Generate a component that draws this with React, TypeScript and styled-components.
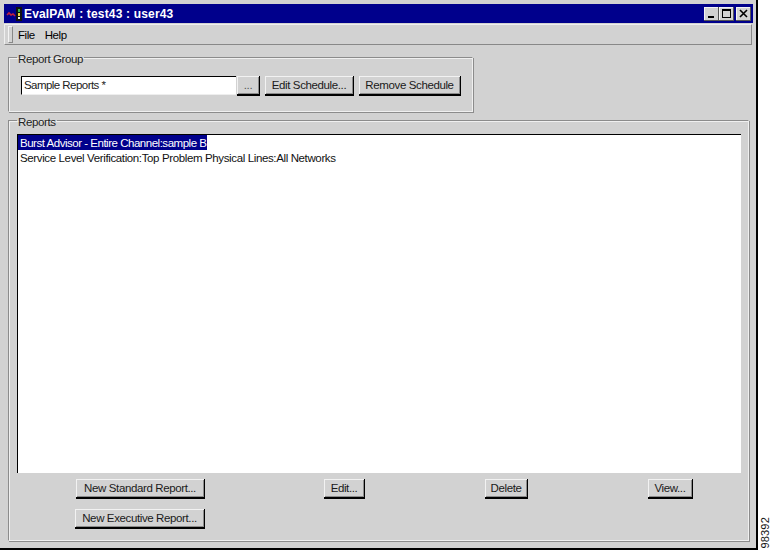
import React from "react";
import styled, { createGlobalStyle } from "styled-components";

const Global = createGlobalStyle`
  html, body { margin: 0; padding: 0; background: #fff; }
  body { font-family: "Liberation Sans", Arial, sans-serif; font-size: 12px; color: #000; }
`;

const Page = styled.div`
  display: flex;
  width: 771px;
  height: 550px;
  overflow: hidden;
`;

const Window = styled.div`
  width: 758px;
  height: 550px;
  box-sizing: border-box;
  background: #d2d2d2;
  border-right: 2px solid #000;
  border-bottom: 2px solid #000;
  padding: 4px 3px 0 4px;
  display: flex;
  flex-direction: column;
  flex: none;
`;

const TitleBar = styled.div`
  height: 19px;
  background: #00008c;
  display: flex;
  align-items: center;
  padding: 0 2px;
  flex: none;
`;

const TitleText = styled.span`
  color: #fff;
  font-weight: 700;
  font-size: 12px;
  letter-spacing: 0.17px;
  margin-left: 2px;
  flex: 1;
`;

const Controls = styled.div`
  display: flex;
  align-items: center;
`;

const ControlButton = styled.div<{ $gap?: boolean }>`
  width: 15px;
  height: 14px;
  background: #d2d2d2;
  margin-left: ${(p) => (p.$gap ? "2px" : "0")};
  box-shadow: inset -1px -1px 0 #555, inset 1px 1px 0 #f4f4f4;
  display: flex;
  align-items: center;
  justify-content: center;
`;

const MenuBar = styled.div`
  height: 21px;
  margin-top: 1px;
  margin-right: 1px;
  box-sizing: border-box;
  border: 1px solid;
  border-color: #efefef #888 #888 #efefef;
  display: flex;
  align-items: center;
  padding-left: 3px;
  flex: none;
`;

const Grip = styled.div`
  width: 3px;
  height: 15px;
  border: 1px solid;
  border-color: #f4f4f4 #888 #888 #f4f4f4;
  margin-right: 5px;
`;

const MenuItem = styled.span`
  margin-right: 10px;
  font-size: 11.5px;
  letter-spacing: -0.45px;
`;

const GroupBox = styled.fieldset`
  margin: 0;
  min-width: 0;
  box-sizing: border-box;
  border: 1px solid #8c8c8c;
  border-right-color: #f0f0f0;
  border-bottom-color: #f0f0f0;
  box-shadow: inset 1px 1px 0 #f0f0f0, 1px 1px 0 #8c8c8c;
  padding: 0;
`;

const TopGroup = styled(GroupBox)`
  width: 465px;
  height: 64px;
  margin: 3px 0 0 4px;
  flex: none;
`;

const BottomGroup = styled(GroupBox)`
  width: 741px;
  height: 430px;
  margin: -1px 0 0 4px;
  flex: none;
  display: flex;
  flex-direction: column;
`;

const Legend = styled.legend`
  margin-left: 8px;
  padding: 4px 1px 0;
  font-size: 11.5px;
  letter-spacing: -0.38px;
  line-height: 14px;
  color: #222;
`;

const GroupRow = styled.div`
  display: flex;
  align-items: flex-start;
  padding: 10px 0 0 12px;
`;

const Input = styled.div`
  width: 215px;
  height: 19px;
  box-sizing: border-box;
  background: #fff;
  border-top: 1px solid #000;
  border-left: 1px solid #000;
  border-bottom: 1px solid #eee;
  padding-left: 2px;
  line-height: 16px;
  font-size: 11.5px;
  letter-spacing: -0.55px;
  color: #222;
`;

const Btn = styled.div<{ $w: number; $ml?: number; $dim?: boolean }>`
  width: ${(p) => p.$w}px;
  height: 20px;
  margin-left: ${(p) => p.$ml ?? 0}px;
  box-sizing: border-box;
  background: #d2d2d2;
  border-right: 1px solid #000;
  border-bottom: 2px solid #000;
  box-shadow: inset 1px 1px 0 #f2f2f2, inset -1px -1px 0 #8c8c8c;
  display: flex;
  align-items: center;
  justify-content: center;
  font-size: 11.5px;
  letter-spacing: -0.38px;
  color: ${(p) => (p.$dim ? "#555" : "#1a1a1a")};
  flex: none;
`;

const List = styled.div`
  width: 724px;
  height: 339px;
  margin: 5px 0 0 8px;
  box-sizing: border-box;
  background: #fff;
  border-top: 1px solid #000;
  border-left: 1px solid #000;
  flex: none;
`;

const ListRow = styled.div<{ $selected?: boolean }>`
  display: block;
  width: fit-content;
  height: 15px;
  line-height: 17px;
  padding: 0 1px 0 2px;
  font-size: 11.5px;
  letter-spacing: ${(p) => (p.$selected ? "-0.48px" : "-0.37px")};
  background: ${(p) => (p.$selected ? "#00008c" : "transparent")};
  color: ${(p) => (p.$selected ? "#fff" : "#111")};
`;

const ActionRow = styled.div<{ $top: number; $left: number }>`
  display: flex;
  margin: ${(p) => p.$top}px 0 0 ${(p) => p.$left}px;
  flex: none;
`;

const Stamp = styled.div`
  align-self: flex-end;
  writing-mode: vertical-rl;
  transform: rotate(180deg);
  font-size: 11px;
  line-height: 12px;
  margin: 0 0 1px 1px;
  color: #111;
  letter-spacing: 0.2px;
`;

const AppIcon = () => (
  <svg width="16" height="14" viewBox="0 0 16 14">
    <path d="M1 8l2-2 2 2 2-1 2 2" stroke="#c2203c" strokeWidth="1.6" fill="none" />
    <rect x="10" y="0" width="6" height="14" fill="#111" />
    <rect x="12" y="2" width="2" height="3" fill="#35b04a" />
    <rect x="12" y="6" width="2" height="3" fill="#e6d640" />
    <rect x="12" y="10" width="2" height="2" fill="#eee" />
  </svg>
);

export default function App() {
  return (
    <Page>
      <Global />
      <Window>
        <TitleBar>
          <AppIcon />
          <TitleText>EvalPAM : test43 : user43</TitleText>
          <Controls>
            <ControlButton>
              <svg width="9" height="9" viewBox="0 0 9 9"><rect x="1" y="7" width="6" height="2" fill="#000" /></svg>
            </ControlButton>
            <ControlButton>
              <svg width="9" height="9" viewBox="0 0 9 9"><path d="M0 0h9v9H0zM1 2v6h7V2z" fill="#000" fillRule="evenodd" /></svg>
            </ControlButton>
            <ControlButton $gap>
              <svg width="9" height="9" viewBox="0 0 9 9"><path d="M1 1l7 7M8 1L1 8" stroke="#000" strokeWidth="1.6" /></svg>
            </ControlButton>
          </Controls>
        </TitleBar>
        <MenuBar>
          <Grip />
          <MenuItem>File</MenuItem>
          <MenuItem>Help</MenuItem>
        </MenuBar>
        <TopGroup>
          <Legend>Report Group</Legend>
          <GroupRow>
            <Input>Sample Reports *</Input>
            <Btn $w={23} $ml={1} $dim>...</Btn>
            <Btn $w={89} $ml={5}>Edit Schedule...</Btn>
            <Btn $w={102} $ml={5}>Remove Schedule</Btn>
          </GroupRow>
        </TopGroup>
        <BottomGroup>
          <Legend>Reports</Legend>
          <List>
            <ListRow $selected>Burst Advisor - Entire Channel:sample B</ListRow>
            <ListRow>Service Level Verification:Top Problem Physical Lines:All Networks</ListRow>
          </List>
          <ActionRow $top={6} $left={67}>
            <Btn $w={129}>New Standard Report...</Btn>
            <Btn $w={41} $ml={119}>Edit...</Btn>
            <Btn $w={43} $ml={120}>Delete</Btn>
            <Btn $w={45} $ml={120}>View...</Btn>
          </ActionRow>
          <ActionRow $top={10} $left={66}>
            <Btn $w={130}>New Executive Report...</Btn>
          </ActionRow>
        </BottomGroup>
      </Window>
      <Stamp>98392</Stamp>
    </Page>
  );
}
